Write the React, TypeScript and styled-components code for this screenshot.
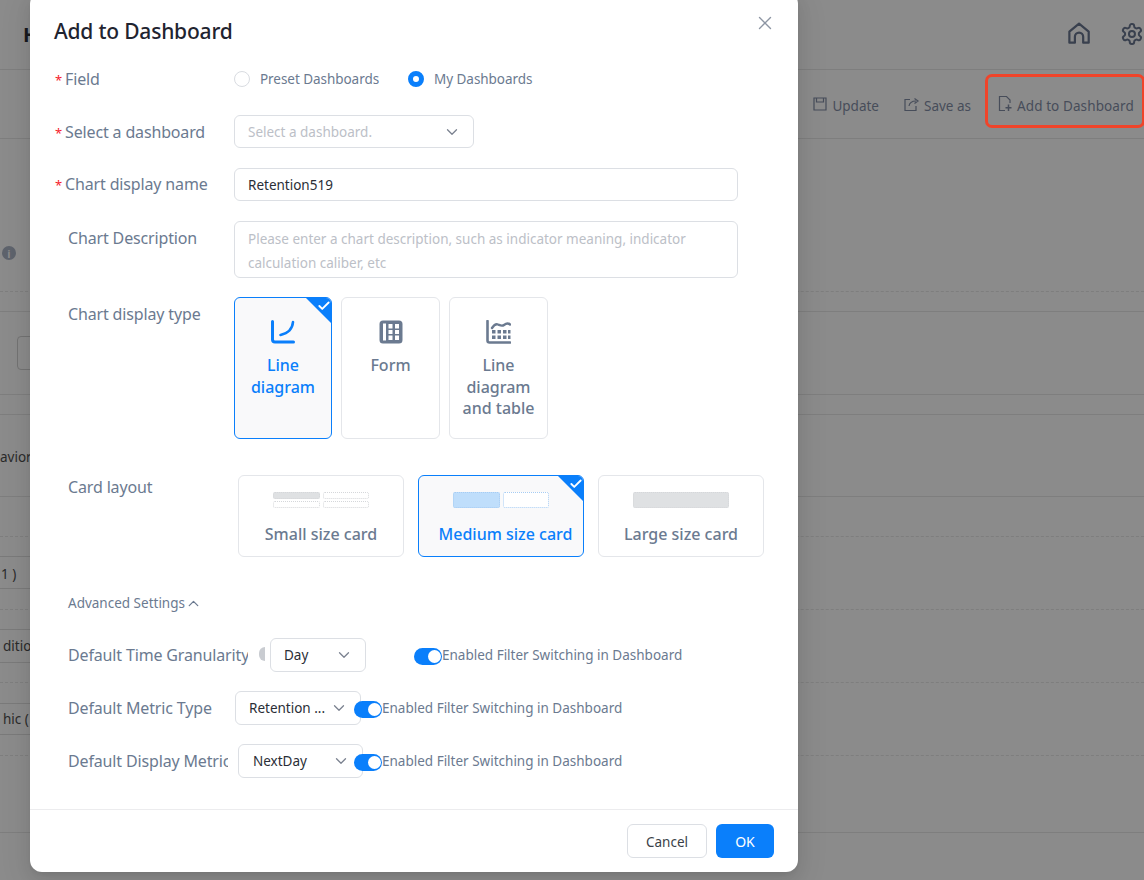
import React from "react";
import styled, { createGlobalStyle } from "styled-components";
import { ChevronDown, ChevronUp, X, Check } from "lucide-react";

const Global = createGlobalStyle`
  html, body { margin: 0; padding: 0; height: 100%; overflow: hidden; background: #8b8b8b; }
  * { box-sizing: border-box; }
  body { font-family: "Noto Sans", "Liberation Sans", sans-serif; }
`;

const Page = styled.div`
  position: relative;
  width: 1144px;
  height: 880px;
  overflow: hidden;
  background: #8b8b8b;
  color: #2a2d33;
`;

const TopBar = styled.div`
  height: 70px;
  padding: 0 0 0 23px;
  display: flex;
  align-items: center;
  justify-content: space-between;
  border-bottom: 1px solid #7e7e7e;
`;
const TopTitle = styled.span`
  font-size: 20px;
  font-weight: 700;
  color: #17191d;
`;
const TopIcons = styled.div`
  display: flex;
  gap: 30px;
  width: 76px;
  overflow: hidden;
  flex: none;
  color: #39404e;
  margin-bottom: 2px;
`;
const ActionBar = styled.div`
  height: 69px;
  display: flex;
  justify-content: flex-end;
  align-items: center;
  border-bottom: 1px solid #7e7e7e;
`;
const Action = styled.div`
  display: flex;
  align-items: center;
  gap: 5px;
  font-size: 13.5px;
  color: #474d5a;
  margin-right: 25px;
  padding-top: 4px;
  svg { margin-top: -4px; }
  &:nth-child(2) { margin-right: 14px; gap: 4px; }
`;
const Highlight = styled.div`
  display: flex;
  align-items: center;
  gap: 3px;
  width: 160px;
  height: 54px;
  margin: -7px -1px 0 0;
  padding: 10px 0 0 10px;
  font-size: 13.5px;
  letter-spacing: 0.1px;
  color: #474d5a;
  border: 3px solid #f0442a;
  border-radius: 7px;
  flex: none;
  white-space: nowrap;
  svg { margin-top: -5px; }
`;
const Band = styled.div<{ $h: number; $line?: string }>`
  height: ${(p) => p.$h}px;
  border-bottom: 1px ${(p) => p.$line || "solid"} #7e7e7e;
  display: flex;
  align-items: center;
  overflow: hidden;
  white-space: nowrap;
`;
const InfoRow = styled.div`
  height: 153px;
  border-bottom: 1px dashed #7e7e7e;
  padding: 107px 0 0 2px;
`;
const InfoDot = styled.span`
  width: 14px;
  height: 14px;
  border-radius: 50%;
  background: #5e636c;
  color: #8b8b8b;
  font-size: 11px;
  font-weight: 700;
  display: flex;
  align-items: center;
  justify-content: center;
`;
const BgBox = styled.span`
  margin-left: 17px;
  width: 40px;
  height: 34px;
  border: 1px solid #737373;
  border-radius: 4px;
`;
const ClipText = styled.span<{ $x: number; $dy?: number }>`
  display: block;
  margin-left: ${(p) => p.$x}px;
  padding-top: ${(p) => p.$dy || 0}px;
  font-size: 13.5px;
  color: #2a2a2a;
`;
const ChipRow = styled.div<{ $h: number; $top: number }>`
  height: ${(p) => p.$h}px;
  padding-top: ${(p) => p.$top}px;
  border-bottom: 1px dashed #7e7e7e;
`;
const Chip = styled.div<{ $h: number }>`
  width: 60px;
  height: ${(p) => p.$h}px;
  border-top: 1px solid #7a7a7a;
  border-bottom: 1px solid #7a7a7a;
  display: flex;
  align-items: center;
  white-space: nowrap;
  overflow: hidden;
`;

const Modal = styled.div`
  position: absolute;
  left: 30px;
  top: -8px;
  width: 768px;
  height: 880px;
  background: #fff;
  border-radius: 12px;
  box-shadow: 0 6px 16px rgba(0, 0, 0, 0.08), 0 3px 6px -4px rgba(0, 0, 0, 0.12),
    0 9px 28px 8px rgba(0, 0, 0, 0.05);
  display: flex;
  flex-direction: column;
`;
const Header = styled.div`
  height: 68px;
  padding: 25px 24px 0;
  display: flex;
  justify-content: space-between;
  align-items: flex-start;
`;
const Title = styled.h1`
  margin: 0;
  font-size: 21px;
  line-height: 28px;
  letter-spacing: -0.2px;
  font-weight: 500;
  color: #1f2430;
`;
const CloseBtn = styled.span`
  color: #8d95a3;
  margin-top: -5px;
  margin-right: -2px;
  display: flex;
`;
const Body = styled.div`
  flex: 1;
  padding: 0 24px;
  display: flex;
  flex-direction: column;
`;
const Row = styled.div<{ $h: number; $align?: string; $mt?: number }>`
  display: flex;
  height: ${(p) => p.$h}px;
  margin-top: ${(p) => p.$mt || 0}px;
  align-items: ${(p) => p.$align || "center"};
`;
const Label = styled.div<{ $req?: boolean; $mt?: number }>`
  width: 180px;
  flex: none;
  font-size: 16px;
  line-height: 22px;
  letter-spacing: -0.15px;
  margin-top: ${(p) => p.$mt || 0}px;
  color: #6b7a90;
  padding-left: ${(p) => (p.$req ? "0" : "14px")};
  white-space: nowrap;
`;
const Star = styled.span`
  color: #f5222d;
  font-size: 13px;
  margin: 0 3px 0 1px;
`;
const Radios = styled.div`
  display: flex;
  align-items: center;
  font-size: 13.5px;
  letter-spacing: -0.05px;
  color: #6b7a90;
`;
const RadioItem = styled.label`
  display: flex;
  align-items: center;
  gap: 10px;
  margin-right: 29px;
`;
const RadioDot = styled.span<{ $on?: boolean }>`
  width: 16px;
  height: 16px;
  border-radius: 50%;
  background: #fff;
  border: ${(p) => (p.$on ? "5px solid #0a7ffb" : "1px solid #d9dce1")};
`;
const SelectBox = styled.div<{ $w: number; $h?: number; $ml?: number; $pad?: number }>`
  width: ${(p) => p.$w}px;
  height: ${(p) => p.$h || 34}px;
  margin-left: ${(p) => p.$ml || 0}px;
  flex: none;
  border: 1px solid #dcdfe4;
  border-radius: 6px;
  background: #fff;
  padding: 0 12px 0 ${(p) => p.$pad || 13}px;
  display: flex;
  align-items: center;
  justify-content: space-between;
  font-size: 13.5px;
  color: #2a2e36;
`;
const Placeholder = styled.span`
  color: #bcc0c7;
`;
const TextBox = styled.div`
  width: 504px;
  height: 33px;
  border: 1px solid #dcdfe4;
  border-radius: 6px;
  padding: 0 13px;
  display: flex;
  align-items: center;
  font-size: 13.5px;
  color: #2a2e36;
`;
const AreaBox = styled.div`
  width: 504px;
  height: 57px;
  border: 1px solid #dcdfe4;
  border-radius: 6px;
  padding: 5px 13px;
  font-size: 13.5px;
  line-height: 24px;
  color: #bcc0c7;
`;
const TypeGrid = styled.div`
  display: flex;
  gap: 9px;
`;
const TypeCard = styled.div<{ $on?: boolean }>`
  position: relative;
  width: ${(p) => (p.$on ? 98 : 99)}px;
  height: 142px;
  border: 1px solid ${(p) => (p.$on ? "#0a7ffb" : "#e4e6ea")};
  border-radius: 6px;
  background: ${(p) => (p.$on ? "#f9f9fa" : "#fff")};
  color: ${(p) => (p.$on ? "#0a7ffb" : "#6b7a90")};
  overflow: hidden;
  display: flex;
  flex-direction: column;
  align-items: center;
  padding-top: 22px;
  font-size: 16px;
  font-weight: 500;
  line-height: 21.5px;
  text-align: center;
`;
const TypeText = styled.div`
  margin-top: 11px;
  width: 80px;
`;
const Corner = styled.span`
  position: absolute;
  right: 0;
  top: 0;
  width: 0;
  height: 0;
  border-top: 25px solid #0a7ffb;
  border-left: 25px solid transparent;
`;
const CornerCheck = styled(Check)`
  position: absolute;
  right: 0;
  top: 1px;
  color: #fff;
`;
const LayoutGrid = styled.div`
  display: flex;
  gap: 14px;
  margin-left: 4px;
`;
const LayoutCard = styled.div<{ $on?: boolean }>`
  position: relative;
  width: 166px;
  height: 82px;
  border: 1px solid ${(p) => (p.$on ? "#0a7ffb" : "#e4e6ea")};
  border-radius: 6px;
  background: ${(p) => (p.$on ? "#f9f9fa" : "#fff")};
  color: ${(p) => (p.$on ? "#0a7ffb" : "#6b7a90")};
  overflow: hidden;
  display: flex;
  flex-direction: column;
  align-items: center;
  padding-top: 16px;
  font-size: 16px;
  font-weight: 500;
`;
const Thumb = styled.div<{ $cols: number; $rows: number }>`
  width: 96px;
  height: 16px;
  display: grid;
  grid-template-columns: repeat(${(p) => p.$cols}, 1fr);
  grid-template-rows: repeat(${(p) => p.$rows}, 1fr);
  gap: 2px 3px;
`;
const Cell = styled.span<{ $tone?: "gray" | "blue" | "none"; $blue?: boolean }>`
  border: 1px dotted ${(p) => (p.$blue ? "#a6ccf3" : "#d5d7da")};
  border-radius: 2px;
  background: ${(p) =>
    p.$tone === "gray" ? "#dfe1e3" : p.$tone === "blue" ? "#bfdefb" : "#fff"};
`;
const LayoutText = styled.div<{ $shift?: number }>`
  margin-top: 14px;
  margin-left: ${(p) => p.$shift || 0}px;
  line-height: 24px;
`;
const Advanced = styled.div`
  display: flex;
  align-items: center;
  margin: 36px 0 0 14px;
  font-size: 13.5px;
  color: #6b7a90;
  height: 20px;
`;
const Setting = styled.div<{ $mt: number }>`
  display: flex;
  align-items: center;
  height: 34px;
  margin-top: ${(p) => p.$mt}px;
  font-size: 13.5px;
  color: #6b7a90;
`;
const SettingLabel = styled.div<{ $w: number }>`
  width: ${(p) => p.$w}px;
  flex: none;
  margin-left: 14px;
  font-size: 16px;
  letter-spacing: -0.15px;
  color: #6b7a90;
  white-space: nowrap;
  overflow: hidden;
`;
const HalfDot = styled.span`
  width: 6px;
  height: 14px;
  margin-left: 11px;
  border-radius: 7px 0 0 7px;
  background: #c9ccd1;
  flex: none;
  margin-bottom: 2px;
`;
const Toggle = styled.span<{ $ml: number }>`
  flex: none;
  width: 28px;
  height: 17px;
  margin: 2px 0 0 ${(p) => p.$ml}px;
  border-radius: 9px;
  background: #0a7ffb;
  display: flex;
  justify-content: flex-end;
  align-items: center;
  padding-right: 1px;
  &::after {
    content: "";
    width: 13px;
    height: 13px;
    border-radius: 50%;
    background: #fff;
  }
`;
const Footer = styled.div`
  height: 63px;
  flex: none;
  border-top: 1px solid #ececee;
  display: flex;
  justify-content: flex-end;
  align-items: center;
  gap: 9px;
  padding: 0 24px 0 0;
`;
const Cancel = styled.button`
  width: 80px;
  height: 34px;
  border: 1px solid #dcdfe4;
  border-radius: 6px;
  background: #fff;
  color: #3a3f48;
  padding-top: 2px;
  font: 13.5px "Noto Sans", sans-serif;
`;
const Ok = styled.button`
  width: 58px;
  height: 34px;
  border: 0;
  border-radius: 6px;
  background: #0a7ffb;
  color: #fff;
  font: 14px "Noto Sans", sans-serif;
`;

const HomeIcon = () => (
  <svg width="24" height="24" viewBox="0 0 24 24" fill="none" stroke="currentColor" strokeWidth="2.400">
    <path d="M1.500 22.500V10.500L12 1.800l10.500 8.700v12h-6v-6.500a4.500 4.500 0 0 0-9 0v6.500z" strokeLinejoin="round" />
  </svg>
);
const GearIcon = () => (
  <svg width="26" height="26" viewBox="0 0 24 24" fill="none" stroke="currentColor" strokeWidth="2">
    <path d="M12.220 2h-.440a2 2 0 0 0-2 2v.180a2 2 0 0 1-1 1.730l-.430.250a2 2 0 0 1-2 0l-.150-.080a2 2 0 0 0-2.730.730l-.220.380a2 2 0 0 0 .730 2.730l.150.100a2 2 0 0 1 1 1.720v.510a2 2 0 0 1-1 1.740l-.150.090a2 2 0 0 0-.730 2.730l.220.380a2 2 0 0 0 2.730.730l.150-.080a2 2 0 0 1 2 0l.430.250a2 2 0 0 1 1 1.730V20a2 2 0 0 0 2 2h.440a2 2 0 0 0 2-2v-.180a2 2 0 0 1 1-1.730l.430-.250a2 2 0 0 1 2 0l.150.080a2 2 0 0 0 2.730-.730l.220-.390a2 2 0 0 0-.730-2.730l-.150-.080a2 2 0 0 1-1-1.740v-.500a2 2 0 0 1 1-1.740l.150-.090a2 2 0 0 0 .730-2.730l-.220-.380a2 2 0 0 0-2.730-.730l-.150.080a2 2 0 0 1-2 0l-.430-.250a2 2 0 0 1-1-1.730V4a2 2 0 0 0-2-2z" />
    <circle cx="12" cy="12" r="3" />
  </svg>
);
const UpdateIcon = () => (
  <svg width="14" height="14" viewBox="0 0 14 14" fill="none" stroke="currentColor" strokeWidth="1.200">
    <path d="M1 1h12v12H1zM3.500 1v4h7V1" />
  </svg>
);
const SaveAsIcon = () => (
  <svg width="16" height="15" viewBox="0 0 16 15" fill="none" stroke="currentColor" strokeWidth="1.200">
    <path d="M6 2.500H1v11h11V9M5 9c.5-3 2.500-5 7-5M10.500 1.500 14 4l-3.500 2.500" />
  </svg>
);
const AddIcon = () => (
  <svg width="16" height="17" viewBox="0 0 16 17" fill="none" stroke="currentColor" strokeWidth="1.200">
    <path d="M7 15.500H1.500v-14h7l3.500 3.500v3" />
    <path d="M10.500 9.500v6.500M7.500 12.700h6" strokeWidth="1.500" />
  </svg>
);
const LineIcon = () => (
  <svg width="24" height="24" viewBox="0 0 24 24" fill="none" stroke="currentColor" strokeWidth="3" strokeLinecap="round">
    <path d="M1.500 1.500v18a2.500 2.500 0 0 0 2.500 2.500h18.500" />
    <path d="M22 2c-.500 6.500-4 11-12.500 13" strokeWidth="2.600" />
  </svg>
);
const FormIcon = () => (
  <svg width="24" height="24" viewBox="0 0 24 24">
    <path
      fill="currentColor"
      fillRule="evenodd"
      d="M4 .500h16A3.500 3.500 0 0 1 23.500 4v16a3.500 3.500 0 0 1-3.500 3.500H4A3.500 3.500 0 0 1 .500 20V4A3.500 3.500 0 0 1 4 .500zM7 3.500H4v17h3zM9.500 4v4.500h4V4zm6.500 0v4.500h4V4zM9.500 10v4h4v-4zm6.500 0v4h4v-4zM9.500 15.500V20h4v-4.500zm6.500 0V20h4v-4.500z"
    />
  </svg>
);
const LineTableIcon = () => (
  <svg width="25" height="24" viewBox="0 0 25 24">
    <path d="M1.500 1v19.500a2 2 0 0 0 2 2H24" fill="none" stroke="currentColor" strokeWidth="2.600" strokeLinecap="round" />
    <path d="M6 8c2-3 3.500-4.500 6-3.500s4 2 6 .5 3.500-2.500 6-.5" fill="none" stroke="currentColor" strokeWidth="2.400" strokeLinecap="round" />
    <path
      fill="currentColor"
      d="M6 10h3.500v3.500H6zm5.500 0H15v3.500h-3.500zM17 10h3.500v3.500H17zm5 0h2.500v3.500H22zM6 15.500h3.500V19H6zm5.500 0H15V19h-3.500zm5.500 0h3.500V19H17zm5 0h2.500V19H22z"
    />
  </svg>
);

const settings = [
  { label: "Default Time Granularity", w: 180, half: true, select: "Day", sw: 96, sml: 5, pad: 13, tml: 48, mt: 25 },
  { label: "Default Metric Type", w: 167, half: false, select: "Retention ...", sw: 126, sml: 0, pad: 13, tml: -7, mt: 19 },
  { label: "Default Display Metric", w: 160, half: false, select: "NextDay", sw: 125, sml: 10, pad: 14, tml: -9, mt: 19 },
];

export default function App() {
  return (
    <Page>
      <Global />
      <TopBar>
        <TopTitle>H</TopTitle>
        <TopIcons>
          <HomeIcon />
          <GearIcon />
        </TopIcons>
      </TopBar>
      <ActionBar>
        <Action><UpdateIcon />Update</Action>
        <Action><SaveAsIcon />Save as</Action>
        <Highlight><AddIcon />Add to Dashboard</Highlight>
      </ActionBar>
      <InfoRow><InfoDot>i</InfoDot></InfoRow>
      <Band $h={20} />
      <Band $h={83}><BgBox /></Band>
      <Band $h={20} />
      <Band $h={82}><ClipText $x={0} $dy={2}>avior</ClipText></Band>
      <ChipRow $h={40} $top={0} />
      <ChipRow $h={73} $top={19}><Chip $h={33}><ClipText $x={1} $dy={2}>1 )</ClipText></Chip></ChipRow>
      <ChipRow $h={73} $top={19}><Chip $h={34}><ClipText $x={3}>ditio</ClipText></Chip></ChipRow>
      <ChipRow $h={73} $top={20}><Chip $h={32}><ClipText $x={3}>hic (</ClipText></Chip></ChipRow>
      <Band $h={77} />

      <Modal>
        <Header>
          <Title>Add to Dashboard</Title>
          <CloseBtn><X size={22} strokeWidth={1.500} /></CloseBtn>
        </Header>
        <Body>
          <Row $h={38}>
            <Label $req><Star>*</Star>Field</Label>
            <Radios>
              <RadioItem><RadioDot />Preset Dashboards</RadioItem>
              <RadioItem><RadioDot $on />My Dashboards</RadioItem>
            </Radios>
          </Row>
          <Row $h={33} $mt={17}>
            <Label $req $mt={1}><Star>*</Star>Select a dashboard</Label>
            <SelectBox $w={240} $h={33}>
              <Placeholder>Select a dashboard.</Placeholder>
              <ChevronDown size={18} strokeWidth={1.700} color="#7b8290" />
            </SelectBox>
          </Row>
          <Row $h={33} $mt={20}>
            <Label $req><Star>*</Star>Chart display name</Label>
            <TextBox>Retention519</TextBox>
          </Row>
          <Row $h={57} $align="flex-start" $mt={20}>
            <Label $mt={6}>Chart Description</Label>
            <AreaBox>Please enter a chart description, such as indicator meaning, indicator calculation caliber, etc</AreaBox>
          </Row>
          <Row $h={142} $align="flex-start" $mt={19}>
            <Label $mt={6}>Chart display type</Label>
            <TypeGrid>
              <TypeCard $on>
                <LineIcon />
                <TypeText>Line diagram</TypeText>
                <Corner />
                <CornerCheck size={14} strokeWidth={3.200} />
              </TypeCard>
              <TypeCard>
                <FormIcon />
                <TypeText>Form</TypeText>
              </TypeCard>
              <TypeCard>
                <LineTableIcon />
                <TypeText>Line diagram and table</TypeText>
              </TypeCard>
            </TypeGrid>
          </Row>
          <Row $h={82} $align="flex-start" $mt={36}>
            <Label $mt={1}>Card layout</Label>
            <LayoutGrid>
              <LayoutCard>
                <Thumb $cols={2} $rows={2}>
                  <Cell $tone="gray" /><Cell /><Cell /><Cell />
                </Thumb>
                <LayoutText>Small size card</LayoutText>
              </LayoutCard>
              <LayoutCard $on>
                <Thumb $cols={2} $rows={1}>
                  <Cell $tone="blue" $blue /><Cell $blue />
                </Thumb>
                <LayoutText $shift={9}>Medium size card</LayoutText>
                <Corner />
                <CornerCheck size={14} strokeWidth={3.200} />
              </LayoutCard>
              <LayoutCard>
                <Thumb $cols={1} $rows={1}>
                  <Cell $tone="gray" />
                </Thumb>
                <LayoutText>Large size card</LayoutText>
              </LayoutCard>
            </LayoutGrid>
          </Row>
          <Advanced>
            Advanced Settings<ChevronUp size={17} strokeWidth={1.800} />
          </Advanced>
          {settings.map((s) => (
            <Setting key={s.label} $mt={s.mt}>
              <SettingLabel $w={s.w}>{s.label}</SettingLabel>
              {s.half && <HalfDot />}
              <SelectBox $w={s.sw} $ml={s.sml} $pad={s.pad}>
                {s.select}
                <ChevronDown size={18} strokeWidth={1.700} color="#7b8290" />
              </SelectBox>
              <Toggle $ml={s.tml} />
              Enabled Filter Switching in Dashboard
            </Setting>
          ))}
        </Body>
        <Footer>
          <Cancel>Cancel</Cancel>
          <Ok>OK</Ok>
        </Footer>
      </Modal>
    </Page>
  );
}
